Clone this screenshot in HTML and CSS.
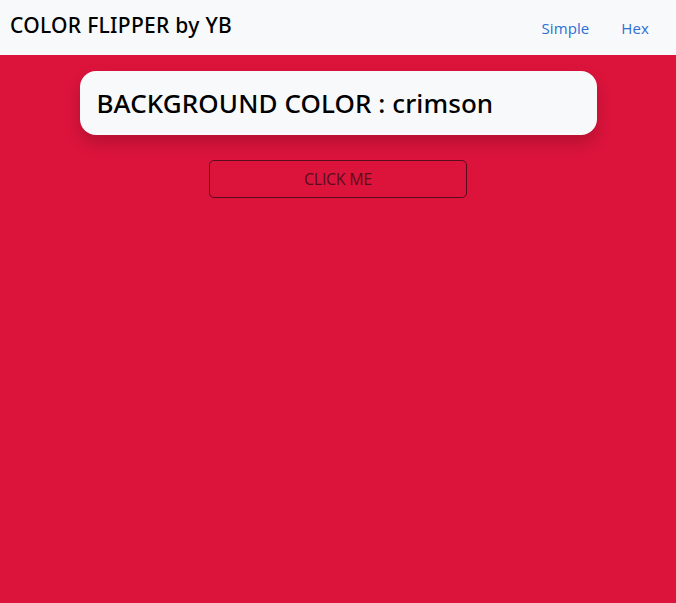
FILE: index.html
```html
<!DOCTYPE html>
<html lang="en">
<head>
<meta charset="utf-8">
<title>Color Flipper</title>
<link rel="stylesheet" href="styles.css">
</head>
<body>
<nav class="navbar">
  <span class="brand">COLOR FLIPPER by YB</span>
  <ul class="nav-links">
    <li><a href="#">Simple</a></li>
    <li><a href="#">Hex</a></li>
  </ul>
</nav>
<main class="main">
  <div class="card">
    <h2 class="title">BACKGROUND COLOR : <span class="color-name">crimson</span></h2>
  </div>
  <button class="btn" type="button">CLICK ME</button>
</main>
</body>
</html>
```
FILE: styles.css
```css
html, body {
  margin: 0;
  padding: 0;
  height: 100%;
}
body {
  background: crimson;
  font-family: "Open Sans", "Noto Sans", sans-serif;
  color: #000;
}
.navbar {
  background: #f8f9fa;
  height: 55px;
  display: flex;
  align-items: center;
  justify-content: space-between;
  padding: 0 11px 0 10px;
  box-sizing: border-box;
}
.brand {
  font-family: "Noto Sans", "Open Sans", sans-serif;
  font-size: 21px;
  font-weight: 500;
  letter-spacing: 0.3px;
  margin-top: -5px;
}
.nav-links {
  list-style: none;
  display: flex;
  margin: 0;
  padding: 0;
  gap: 0;
}
.nav-links a {
  display: block;
  color: #2d6fd6;
  text-decoration: none;
  font-size: 15px;
  padding: 8px 16px;
  letter-spacing: 0.1px;
}
.main {
  display: flex;
  flex-direction: column;
  align-items: center;
  padding-top: 16px;
}
.card {
  width: 517px;
  height: 64px;
  box-sizing: border-box;
  background: #f8f9fa;
  border-radius: 16px;
  box-shadow: 0 8px 16px rgba(0, 0, 0, 0.18);
  padding: 0 17px;
  display: flex;
  align-items: center;
}
.title {
  font-family: "Noto Sans", "Open Sans", sans-serif;
  margin: 0;
  font-size: 26px;
  font-weight: 500;
  letter-spacing: 0.1px;
}
.btn {
  margin-top: 25px;
  width: 258px;
  height: 38px;
  background: transparent;
  border: 1px solid #5a0c1e;
  border-radius: 5px;
  color: #5a0c1e;
  font-family: "Open Sans", "Noto Sans", sans-serif;
  font-size: 16px;
  letter-spacing: -0.3px;
}
```
